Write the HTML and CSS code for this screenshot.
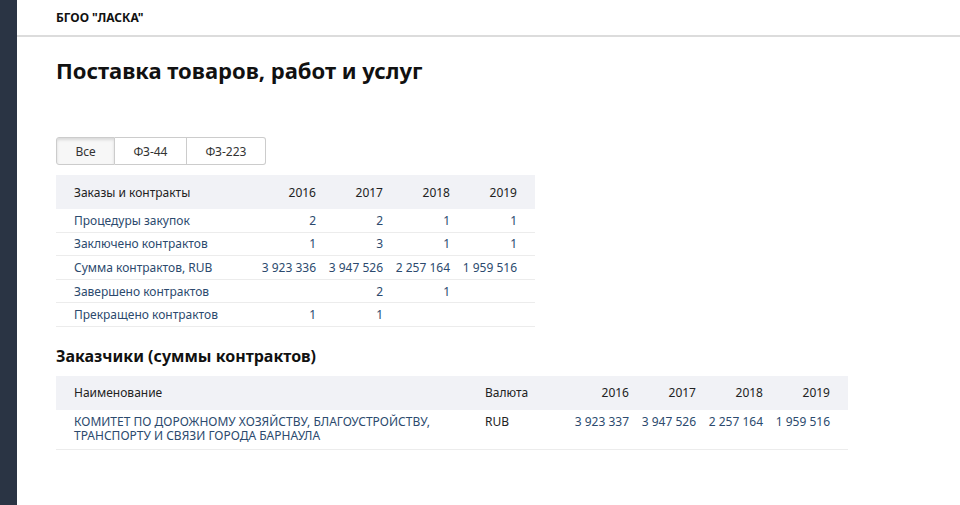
FILE: index.html
```html
<!DOCTYPE html>
<html lang="ru">

<head>
    <meta charset="UTF-8">
    <meta name="viewport" content="width=device-width, initial-scale=1.0">
    <title>Поставка товаров, работ и услуг</title>
    <link rel="stylesheet" href="styles.css">
</head>

<body>
    <div class="sidebar"></div>

    <div class="main">
        <div class="header">
            <span class="org">БГОО "ЛАСКА"</span>
        </div>

        <div class="content">
            <h1>Поставка товаров, работ и услуг</h1>

            <div class="tabs">
                <button class="tab active">Все</button>
                <button class="tab">ФЗ-44</button>
                <button class="tab">ФЗ-223</button>
            </div>

            <table class="tabela tabela-stats">
                <tr>
                    <th class="rotulo">Заказы и контракты</th>
                    <th class="num"><span>2016</span></th>
                    <th class="num"><span>2017</span></th>
                    <th class="num"><span>2018</span></th>
                    <th class="num"><span>2019</span></th>
                </tr>
                <tr>
                    <td><a href="#">Процедуры закупок</a></td>
                    <td class="num"><span>2</span></td>
                    <td class="num"><span>2</span></td>
                    <td class="num"><span>1</span></td>
                    <td class="num"><span>1</span></td>
                </tr>
                <tr>
                    <td><a href="#">Заключено контрактов</a></td>
                    <td class="num"><span>1</span></td>
                    <td class="num"><span>3</span></td>
                    <td class="num"><span>1</span></td>
                    <td class="num"><span>1</span></td>
                </tr>
                <tr>
                    <td><a href="#">Сумма контрактов, RUB</a></td>
                    <td class="num"><span>3 923 336</span></td>
                    <td class="num"><span>3 947 526</span></td>
                    <td class="num"><span>2 257 164</span></td>
                    <td class="num"><span>1 959 516</span></td>
                </tr>
                <tr>
                    <td><a href="#">Завершено контрактов</a></td>
                    <td class="num"></td>
                    <td class="num"><span>2</span></td>
                    <td class="num"><span>1</span></td>
                    <td class="num"></td>
                </tr>
                <tr>
                    <td><a href="#">Прекращено контрактов</a></td>
                    <td class="num"><span>1</span></td>
                    <td class="num"><span>1</span></td>
                    <td class="num"></td>
                    <td class="num"></td>
                </tr>
            </table>

            <h2>Заказчики (суммы контрактов)</h2>

            <table class="tabela tabela-clientes">
                <tr>
                    <th class="nome">Наименование</th>
                    <th class="moeda">Валюта</th>
                    <th class="num"><span>2016</span></th>
                    <th class="num"><span>2017</span></th>
                    <th class="num"><span>2018</span></th>
                    <th class="num"><span>2019</span></th>
                </tr>
                <tr>
                    <td class="nome"><a href="#">КОМИТЕТ ПО ДОРОЖНОМУ ХОЗЯЙСТВУ, БЛАГОУСТРОЙСТВУ, ТРАНСПОРТУ И СВЯЗИ ГОРОДА БАРНАУЛА</a></td>
                    <td class="moeda">RUB</td>
                    <td class="num"><span>3 923 337</span></td>
                    <td class="num"><span>3 947 526</span></td>
                    <td class="num"><span>2 257 164</span></td>
                    <td class="num"><span>1 959 516</span></td>
                </tr>
            </table>
        </div>
    </div>
</body>

</html>
```

FILE: styles.css
```css
body {
    margin: 0;
    font-family: "Noto Sans", Arial, sans-serif;
    font-size: 12px;
    color: #222;
    background-color: #fff;
    display: flex;
    min-height: 100vh;
}

.sidebar {
    width: 17px;
    flex-shrink: 0;
    background-color: #2a3444;
}

.main {
    flex: 1;
}

.header {
    height: 35px;
    border-bottom: 2px solid #dcdcdc;
    padding-left: 39px;
    display: flex;
    align-items: center;
}

.org {
    font-size: 12px;
    font-weight: bold;
    color: #111;
}

.content {
    padding: 0 39px;
}

h1 {
    margin: 18px 0 0 0;
    font-size: 22px;
    font-weight: bold;
    color: #111;
    line-height: 30px;
}

.tabs {
    display: flex;
    margin-top: 52px;
}

.tab {
    font-family: inherit;
    font-size: 12px;
    color: #333;
    background-color: #fff;
    border: 1px solid #ccc;
    border-left: none;
    height: 28px;
    padding: 0;
    cursor: pointer;
}

.tab:first-child {
    border-left: 1px solid #ccc;
    border-radius: 3px 0 0 3px;
}

.tab:last-child {
    border-radius: 0 3px 3px 0;
}

.tab.active {
    width: 59px;
    background-color: #f7f7f7;
    box-shadow: inset 0 2px 3px rgba(0, 0, 0, 0.12);
}

.tab:nth-child(2) {
    width: 72px;
}

.tab:nth-child(3) {
    width: 79px;
}

.tabela {
    border-collapse: collapse;
    table-layout: fixed;
    margin-top: 10px;
}

.tabela th {
    background-color: #f1f2f6;
    font-weight: normal;
    color: #222;
    text-align: left;
    height: 34px;
    padding: 0 18px;
}

.tabela td {
    border-bottom: 1px solid #ececec;
    height: 22.6px;
    padding: 0 18px;
}

.tabela a {
    color: #2c4a6e;
    text-decoration: none;
}

.tabela .num {
    width: 49px;
    text-align: right;
    padding: 0 18px 0 0;
    white-space: nowrap;
}

/* numbers are wider than the cell, let them grow to the left */
.tabela .num span {
    display: block;
    margin-left: -24px;
}

.tabela td.num {
    color: #2c4a6e;
}

.tabela-stats {
    width: 479px;
}

.tabela-stats .rotulo {
    width: 175px;
}

h2 {
    margin: 17px 0 0 0;
    font-size: 16px;
    font-weight: bold;
    color: #111;
    line-height: 24px;
}

.tabela-clientes {
    width: 792px;
    margin-top: 8px;
}

.tabela-clientes th.nome {
    width: 375px;
}

.tabela-clientes th.moeda {
    width: 77px;
}

.tabela-clientes td {
    vertical-align: top;
    padding-top: 5px;
    padding-bottom: 6px;
    height: auto;
    line-height: 14px;
}

.tabela-clientes .moeda {
    padding-left: 18px;
}

.tabela-clientes td.num {
    padding: 5px 18px 6px 0;
}

.tabela-clientes td.moeda {
    color: #222;
}
```
